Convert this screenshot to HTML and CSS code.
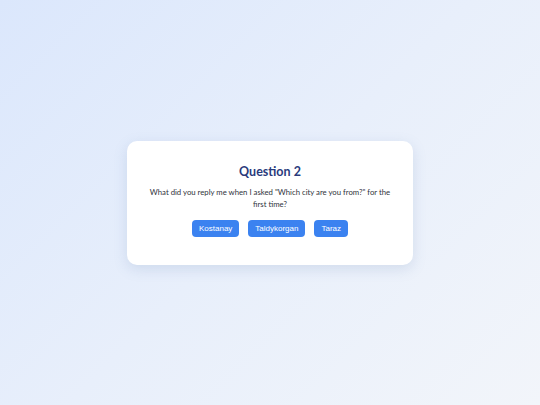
FILE: index.html
```html
<!DOCTYPE html>
<html lang="en">
<head>
<meta charset="utf-8">
<title>Question 2</title>
<link rel="stylesheet" href="styles.css">
</head>
<body>
  <main class="stage">
    <section class="card">
      <h1 class="card-title">Question 2</h1>
      <p class="card-text">What did you reply me when I asked "Which city are you from?" for the first time?</p>
      <div class="answers">
        <button class="answer">Kostanay</button>
        <button class="answer">Taldykorgan</button>
        <button class="answer">Taraz</button>
      </div>
    </section>
  </main>
</body>
</html>
```
FILE: styles.css
```css
html, body {
  margin: 0;
  height: 100%;
}

body {
  background: linear-gradient(135deg, #dbe7fc 0%, #e8effb 50%, #f2f5fa 100%);
  font-family: Lato, "Open Sans", sans-serif;
}

.stage {
  height: 100%;
  display: flex;
  align-items: center;
  justify-content: center;
}

.card {
  width: 286px;
  box-sizing: border-box;
  padding: 23px 20px 28px;
  background: #ffffff;
  border-radius: 10px;
  box-shadow: 0 4px 14px rgba(90, 120, 170, 0.18);
  text-align: center;
}

.card-title {
  margin: 0;
  font-size: 12.5px;
  line-height: 16px;
  font-weight: 700;
  color: #2a3b7c;
}

.card-text {
  margin: 6px 0 10px;
  font-size: 7.75px;
  line-height: 12px;
  color: #2f333b;
}

.answers {
  display: flex;
  justify-content: center;
  gap: 9px;
}

.answer {
  height: 17px;
  padding: 0 7px;
  border: none;
  border-radius: 4px;
  background: #3b82f0;
  color: #ffffff;
  font-family: "Liberation Sans", Arial, sans-serif;
  font-size: 8px;
  cursor: pointer;
}
```
